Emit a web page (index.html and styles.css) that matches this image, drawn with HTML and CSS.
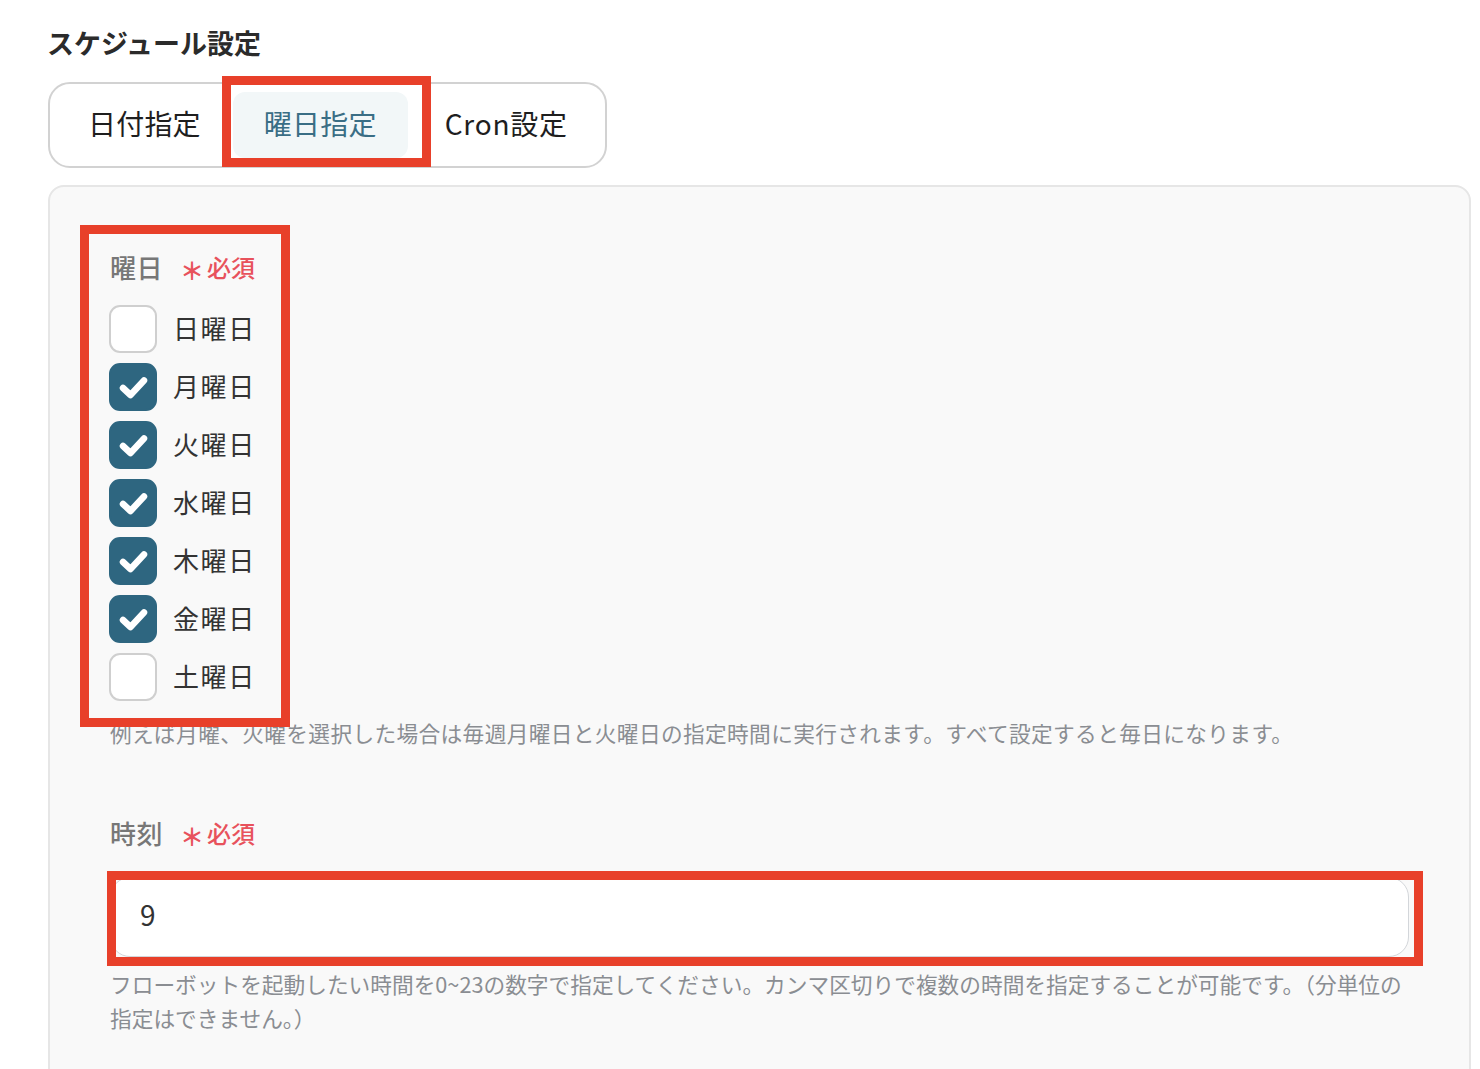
FILE: index.html
```html
<!DOCTYPE html>
<html lang="ja">
<head>
<meta charset="utf-8">
<link rel="stylesheet" href="styles.css">
</head>
<body>
<div class="page">
  <h2 class="title">スケジュール設定</h2>
  <div class="tabs">
    <div class="tab">日付指定</div>
    <div class="tab active">曜日指定</div>
    <div class="tab cron">Cron設定</div>
  </div>
  <div class="panel">
    <div class="field-label"><span class="label-text">曜日</span><span class="req"><span class="ast">＊</span>必須</span></div>
    <div class="checks">
      <div class="check-row"><span class="box"></span><span class="day">日曜日</span></div>
      <div class="check-row"><span class="box on"><svg viewBox="0 0 48 48" width="48" height="48"><path d="M14 25 L21.5 32 L35 17.5" fill="none" stroke="#fff" stroke-width="6.5" stroke-linecap="round" stroke-linejoin="round"/></svg></span><span class="day">月曜日</span></div>
      <div class="check-row"><span class="box on"><svg viewBox="0 0 48 48" width="48" height="48"><path d="M14 25 L21.5 32 L35 17.5" fill="none" stroke="#fff" stroke-width="6.5" stroke-linecap="round" stroke-linejoin="round"/></svg></span><span class="day">火曜日</span></div>
      <div class="check-row"><span class="box on"><svg viewBox="0 0 48 48" width="48" height="48"><path d="M14 25 L21.5 32 L35 17.5" fill="none" stroke="#fff" stroke-width="6.5" stroke-linecap="round" stroke-linejoin="round"/></svg></span><span class="day">水曜日</span></div>
      <div class="check-row"><span class="box on"><svg viewBox="0 0 48 48" width="48" height="48"><path d="M14 25 L21.5 32 L35 17.5" fill="none" stroke="#fff" stroke-width="6.5" stroke-linecap="round" stroke-linejoin="round"/></svg></span><span class="day">木曜日</span></div>
      <div class="check-row"><span class="box on"><svg viewBox="0 0 48 48" width="48" height="48"><path d="M14 25 L21.5 32 L35 17.5" fill="none" stroke="#fff" stroke-width="6.5" stroke-linecap="round" stroke-linejoin="round"/></svg></span><span class="day">金曜日</span></div>
      <div class="check-row"><span class="box"></span><span class="day">土曜日</span></div>
    </div>
    <p class="help help-days">例えば月曜、火曜を選択した場合は毎週月曜日と火曜日の指定時間に実行されます。すべて設定すると毎日になります。</p>

    <div class="field-label time-label"><span class="label-text">時刻</span><span class="req"><span class="ast">＊</span>必須</span></div>
    <div class="input">9</div>
    <p class="help help-time">フローボットを起動したい時間を0~23の数字で指定してください。カンマ区切りで複数の時間を指定することが可能です。（分単位の指定はできません。）</p>
  </div>

  <div class="mark mark-tab"></div>
  <div class="mark mark-days"></div>
  <div class="mark mark-input"></div>
</div>
</body>
</html>
```
FILE: styles.css
```css
* { box-sizing: border-box; }
html, body { margin: 0; padding: 0; background: #fff; }
body {
  font-family: "Noto Sans CJK JP", "Noto Sans", sans-serif;
  color: #333;
  overflow: hidden;
}
.page {
  position: relative;
  padding: 24px 9px 0 48px;
  height: 1069px;
}
.title {
  margin: 0 0 20px -1px;
  font-size: 27px;
  line-height: 38px;
  font-weight: 700;
  color: #2b2b2b;
}
.tabs {
  display: inline-flex;
  align-items: center;
  gap: 1px;
  height: 86px;
  padding: 0 7px;
  border: 2px solid #d2d2d2;
  border-radius: 22px;
  background: #fff;
}
.tab {
  height: 66px;
  padding: 0 31px 4px 31px;
  display: flex;
  align-items: center;
  font-size: 28px;
  color: #1e1e1e;
  border-radius: 12px;
  letter-spacing: 0.2px;
}
.tab.cron {
  padding-left: 36px;
  padding-right: 30px;
  letter-spacing: 0.8px;
}
.tab.active {
  background: #f2f7f8;
  color: #3a6e85;
}
.panel {
  margin-top: 17px;
  height: 1000px;
  background: #f9f9f9;
  border: 2px solid #e6e6e6;
  border-radius: 16px;
  padding: 62px 60px 0 60px;
}
.field-label {
  display: flex;
  align-items: center;
  height: 36px;
  line-height: 36px;
}
.label-text {
  font-size: 26px;
  font-weight: 500;
  color: #777;
  letter-spacing: 0.5px;
}
.req {
  margin-left: 17px;
  font-size: 24px;
  font-weight: 500;
  color: #e8525c;
  display: flex;
  align-items: center;
}
.ast {
  font-size: 24px;
  font-weight: 700;
  margin-right: 3px;
  position: relative;
  top: 3px;
}
.checks {
  margin-top: 20px;
  display: flex;
  flex-direction: column;
  gap: 10px;
}
.check-row {
  display: flex;
  align-items: center;
  height: 48px;
}
.box {
  width: 48px;
  height: 48px;
  border: 2px solid #cfcfcf;
  border-radius: 11px;
  background: #fff;
  display: block;
  position: relative;
  margin-left: -1px;
}
.box.on {
  background: #2e6680;
  border-color: #2e6680;
}
.box svg {
  position: absolute;
  left: -2px;
  top: -2px;
}
.day {
  margin-left: 16px;
  margin-bottom: 4px;
  font-size: 26px;
  letter-spacing: 1.6px;
  color: #333;
}
.help {
  margin: 0;
  font-size: 21.7px;
  line-height: 34px;
  color: #8a8d92;
}
.help-days { margin-top: 15px; letter-spacing: 0.35px; }
.time-label { margin-top: 65px; }
.input {
  margin-top: 26px;
  height: 80px;
  background: #fff;
  border: 1.5px solid #d3d6da;
  border-radius: 20px;
  padding-left: 29px;
  padding-bottom: 6px;
  display: flex;
  align-items: center;
  font-size: 28px;
  color: #333;
}
.help-time { margin-top: 10px; }

.mark {
  position: absolute;
  border: 9px solid #e8402a;
  pointer-events: none;
}
.mark-tab { left: 222px; top: 76px; width: 209px; height: 91px; }
.mark-days { left: 80px; top: 225px; width: 210px; height: 502px; }
.mark-input { left: 107px; top: 871px; width: 1316px; height: 95px; }
```
